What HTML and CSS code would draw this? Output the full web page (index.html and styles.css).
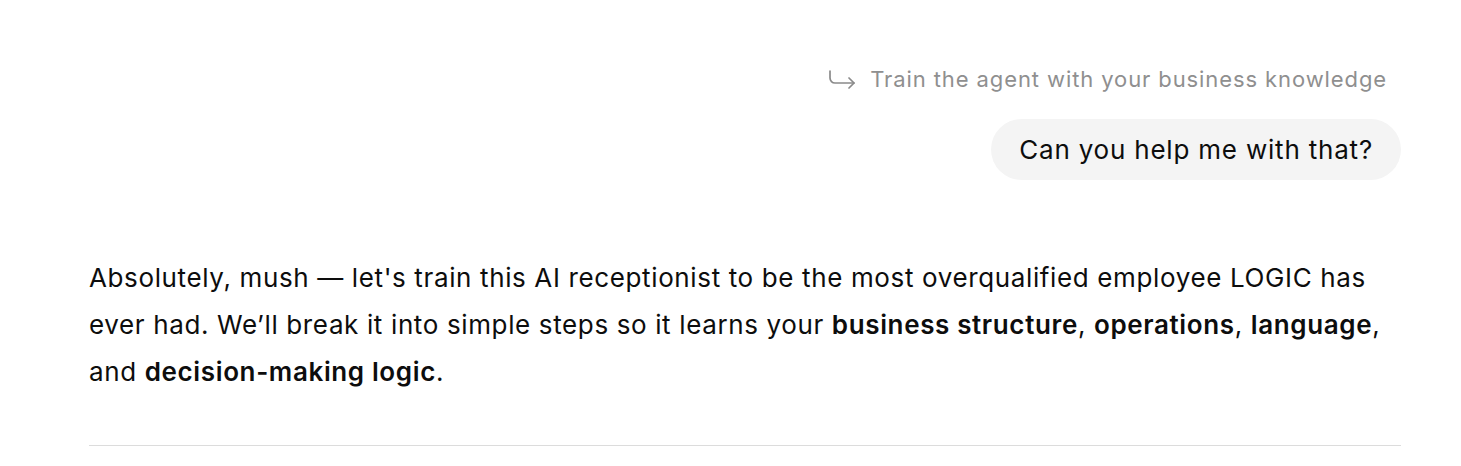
FILE: index.html
```html
<!DOCTYPE html>
<html>
<head>
<meta charset="utf-8">
<link rel="stylesheet" href="styles.css">
</head>
<body>
<main class="thread">
  <div class="user-turn">
    <div class="hint">
      <svg class="hint-icon" width="28" height="19" viewBox="0 0 28 19" fill="none" stroke="currentColor" stroke-width="1.7" stroke-linecap="round" stroke-linejoin="round">
        <path d="M2 1v7a5 5 0 0 0 5 5h19"/>
        <path d="M21 8l5 5-5 5"/>
      </svg>
      <span>Train the agent with your business knowledge</span>
    </div>
    <div class="bubble">Can you help me with that?</div>
  </div>
  <div class="assistant-turn">
    <p class="answer">Absolutely, mush — let's train this AI receptionist to be the most overqualified employee LOGIC has ever had. We’ll break it into simple steps so it learns your <strong>business structure</strong>, <strong>operations</strong>, <strong>language</strong>, and <strong>decision-making logic</strong>.</p>
    <hr class="divider">
  </div>
</main>
</body>
</html>
```
FILE: styles.css
```css
html, body {
  margin: 0;
  padding: 0;
  background: #ffffff;
}
body {
  font-family: Inter, "Noto Sans", sans-serif;
  color: #0d0d0d;
}
.thread {
  width: 1312px;
  margin-left: 89px;
  padding-top: 63px;
}
.user-turn {
  display: flex;
  flex-direction: column;
  align-items: flex-end;
  gap: 24px;
}
.hint {
  display: flex;
  align-items: center;
  gap: 14px;
  padding-right: 14px;
  color: #8f8f8f;
  font-size: 22px;
  line-height: 32px;
  letter-spacing: 0.9px;
}
.hint-icon {
  display: block;
  color: #8a8a8a;
}
.bubble {
  background: #f4f4f4;
  border-radius: 31px;
  padding: 11px 28px;
  font-size: 26px;
  line-height: 39px;
  letter-spacing: 0.8px;
  color: #0d0d0d;
}
.assistant-turn {
  margin-top: 74px;
}
.answer {
  margin: 0;
  font-size: 26px;
  line-height: 47px;
  letter-spacing: 0.63px;
}
.answer strong {
  font-weight: 600;
}
.divider {
  margin: 50px 0 0;
  border: 0;
  height: 1px;
  background: #dcdcdc;
}
```
